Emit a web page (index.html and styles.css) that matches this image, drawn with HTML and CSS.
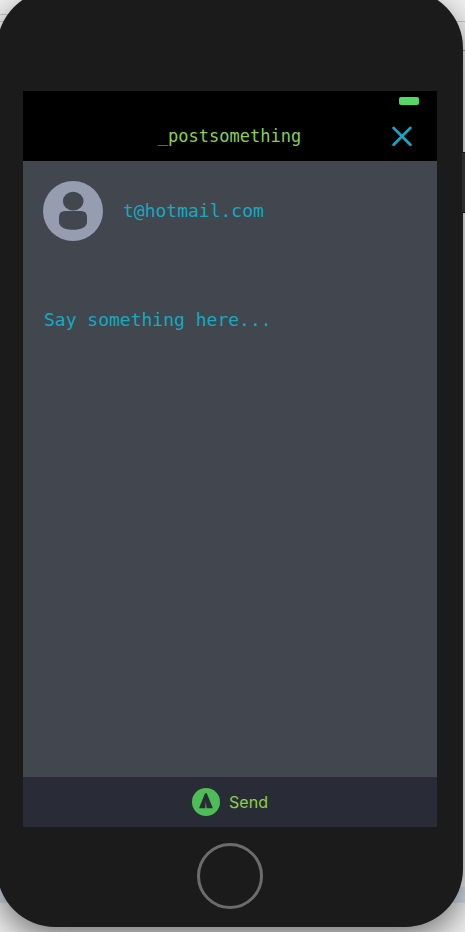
FILE: index.html
```html
<!DOCTYPE html>
<html lang="en">
<head>
<meta charset="utf-8">
<title>Post something</title>
<link rel="stylesheet" href="styles.css">
</head>
<body>
<div class="desktop">
  <div class="phone">
    <main class="screen">
      <header class="header">
        <span class="battery"></span>
        <h1 class="title">_postsomething</h1>
        <button class="close" aria-label="Close">
          <svg width="20" height="20" viewBox="0 0 20 20"><path d="M1.6 1.9 18.4 18.7M18.4 1.9 1.6 18.7"/></svg>
        </button>
      </header>
      <section class="content">
        <div class="user">
          <svg class="avatar" width="60" height="60" viewBox="0 0 60 60">
            <circle class="avatar-disc" cx="30" cy="30" r="30"/>
            <ellipse class="avatar-figure" cx="30.2" cy="20.2" rx="10.3" ry="9.4"/>
            <path class="avatar-figure" d="M22 30H38Q44 30 44 36V41C44 46 38 48.8 30 48.8S16 46 16 41V36Q16 30 22 30Z"/>
          </svg>
          <span class="email">t@hotmail.com</span>
        </div>
        <p class="message">Say something here...</p>
      </section>
      <footer class="send">
        <svg width="28" height="28" viewBox="0 0 28 28">
          <circle class="send-disc" cx="14" cy="14" r="14"/>
          <path class="send-arrow" d="M13 5.2H14.8L20.9 20.2H14.5L14 14.5H13.7L13.2 20.2H7Z"/>
        </svg>
        <span class="send-label">Send</span>
      </footer>
    </main>
    <div class="home"></div>
  </div>
  <span class="side-button"></span>
</div>
</body>
</html>
```

FILE: styles.css
```css
body {
  margin: 0;
}

.desktop {
  position: relative;
  width: 465px;
  height: 932px;
  overflow: hidden;
  background:
    linear-gradient(#c6c6c6, #c6c6c6) 0 14px / 30px 1px no-repeat,
    linear-gradient(#c6c6c6, #c6c6c6) 0 21px / 100% 1px no-repeat,
    linear-gradient(#a0a0a0, #a0a0a0) 100% 50px / 20px 1px no-repeat,
    linear-gradient(#d6e0ec, #d6e0ec) 0 887px / 100% 16px no-repeat,
    #f0f0f0;
}

.phone {
  box-sizing: border-box;
  width: 466px;
  height: 937px;
  margin: -10px 0 0 -3px;
  padding: 101px 26px 0;
  border-radius: 58px;
  background: #1b1b1b;
  box-shadow: 0 12px 32px rgba(0, 0, 0, 0.5);
}

.side-button {
  position: absolute;
  top: 152px;
  right: 0;
  width: 3px;
  height: 61px;
  background: linear-gradient(#111 0 1px, #2c2c2c 1px 60px, #111 60px);
}

.screen {
  display: flex;
  flex-direction: column;
  height: 736px;
  background: #42464f;
}

.header {
  display: grid;
  grid-template: 20px 50px / 70px 1fr 70px;
  background: #000;
}

.battery {
  grid-area: 1 / 3;
  align-self: center;
  width: 20px;
  height: 8px;
  margin-left: 32px;
  border-radius: 2px;
  background: #53d769;
}

.title {
  grid-area: 2 / 2;
  margin: 0;
  color: #8ccf4d;
  font: 17px/50px "DejaVu Sans Mono", monospace;
  text-align: center;
  padding-right: 1px;
}

.close {
  grid-area: 2 / 3;
  display: flex;
  align-items: center;
  padding: 0 0 0 25px;
  border: 0;
  background: none;
}

.close path {
  fill: none;
  stroke: #16a9c7;
  stroke-width: 2.7;
  stroke-linecap: round;
}

.content {
  flex: 1;
  padding: 20px;
  color: #16a9c0;
  font: 18px/22px "DejaVu Sans Mono", monospace;
}

.user {
  display: flex;
  align-items: center;
  gap: 20px;
}

.avatar-disc {
  fill: #969db0;
}

.avatar-figure {
  fill: #42464f;
}

.message {
  margin: 68px 0 0 1px;
}

.send {
  display: flex;
  align-items: center;
  justify-content: center;
  gap: 9px;
  height: 50px;
  background: #292c36;
}

.send-disc {
  fill: #4fbd57;
}

.send-arrow {
  fill: #292c36;
}

.send-label {
  color: #8ccf4d;
  font: 16px/20px Inter, sans-serif;
}

.home {
  box-sizing: border-box;
  width: 66px;
  height: 66px;
  margin: 16px auto 0;
  border: 3px solid #6c6c6c;
  border-radius: 50%;
}
```
